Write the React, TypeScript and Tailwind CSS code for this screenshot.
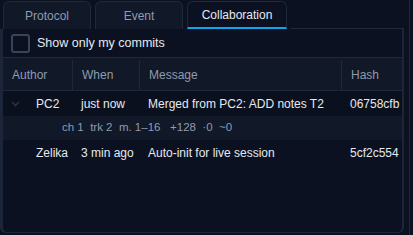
import React from "react";

type Commit = {
  author: string;
  when: string;
  message: string;
  hash: string;
  detail?: string;
};

const commits: Commit[] = [
  {
    author: "PC2",
    when: "just now",
    message: "Merged from PC2: ADD notes T2",
    hash: "06758cfb",
    detail: "ch 1  trk 2  m. 1–16   +128  ·0  ~0",
  },
  { author: "Zelika", when: "3 min ago", message: "Auto-init for live session", hash: "5cf2c554" },
];

function Tab({ label, active, w }: { label: string; active?: boolean; w: string }) {
  return (
    <div
      className={
        "h-[28px] flex items-center justify-center rounded-t-[6px] border border-b-0 border-[#1e293b] " +
        w +
        (active
          ? " bg-[#0b1120] text-[#e5e9f0] border-b-2 border-b-[#0ea5e9]"
          : " bg-[#111827] text-[#8f9bb0]")
      }
    >
      {label}
    </div>
  );
}

export default function App() {
  return (
    <div className="w-[413px] h-[235px] bg-[#0b1120] overflow-hidden font-['Liberation_Sans',sans-serif] text-[12px]">
      <div className="w-[410px] h-full border-r border-[#1e293b] flex flex-col">
        <div className="flex items-end gap-[4px] pl-[3px] pt-[1px] h-[29px] shrink-0">
          <Tab label="Protocol" w="w-[88px]" />
          <Tab label="Event" w="w-[88px]" />
          <Tab label="Collaboration" active w="w-[100px]" />
          <div className="flex-1 border-b border-[#1e293b] mr-[5px]" />
        </div>

        <div className="flex-1 mr-[5px] mb-[2px] border-l-[3px] border-r-2 border-b border-[#1c2638] rounded-b-[6px] flex flex-col">
          <label className="flex items-center gap-[7px] h-[28px] pl-[8px] shrink-0 text-[#e5e9f0] text-[12.5px]">
            <span className="w-[19px] h-[19px] rounded-[3px] border-2 border-[#3a4456] bg-[#0b1120]" />
            Show only my commits
          </label>

          <div className="border-t border-[#1e293b]">
            <div className="flex h-[33px] pt-[2px] bg-[#111827] border-b border-[#1e293b] text-[#8f9bb0]">
              <div className="w-[70px] flex items-center pl-[9px] border-r border-[#1e293b]">Author</div>
              <div className="w-[67px] flex items-center pl-[9px] border-r border-[#1e293b]">When</div>
              <div className="w-[202px] flex items-center pl-[9px] border-r border-[#1e293b]">Message</div>
              <div className="flex-1 flex items-center pl-[9px]">Hash</div>
            </div>

            {commits.map((c, i) => (
              <div key={c.hash}>
                <div
                  className={
                    "flex h-[25px] items-center text-[#e5e9f0] whitespace-nowrap " +
                    (i === 0 ? "bg-[#0a101d]" : "")
                  }
                >
                  <div className="w-[70px] flex items-center pl-[8px] gap-[16px]">
                    <span className="w-[9px] flex justify-center">
                      {c.detail && (
                        <svg width="9" height="6" viewBox="0 0 9 6" fill="none">
                          <path d="M1 1l3.5 3.5L8 1" stroke="#2d3748" strokeWidth="1.3" />
                        </svg>
                      )}
                    </span>
                    {c.author}
                  </div>
                  <div className="w-[67px] pl-[8px]">{c.when}</div>
                  <div className="w-[202px] pl-[8px]">{c.message}</div>
                  <div className="flex-1 pl-[8px]">{c.hash}</div>
                </div>
                {c.detail && (
                  <div className="h-[24px] flex items-center pl-[59px] bg-[#111827] text-[#8f9bb0] text-[11.5px] whitespace-pre">
                    {c.detail}
                  </div>
                )}
              </div>
            ))}
          </div>
        </div>
      </div>
    </div>
  );
}
